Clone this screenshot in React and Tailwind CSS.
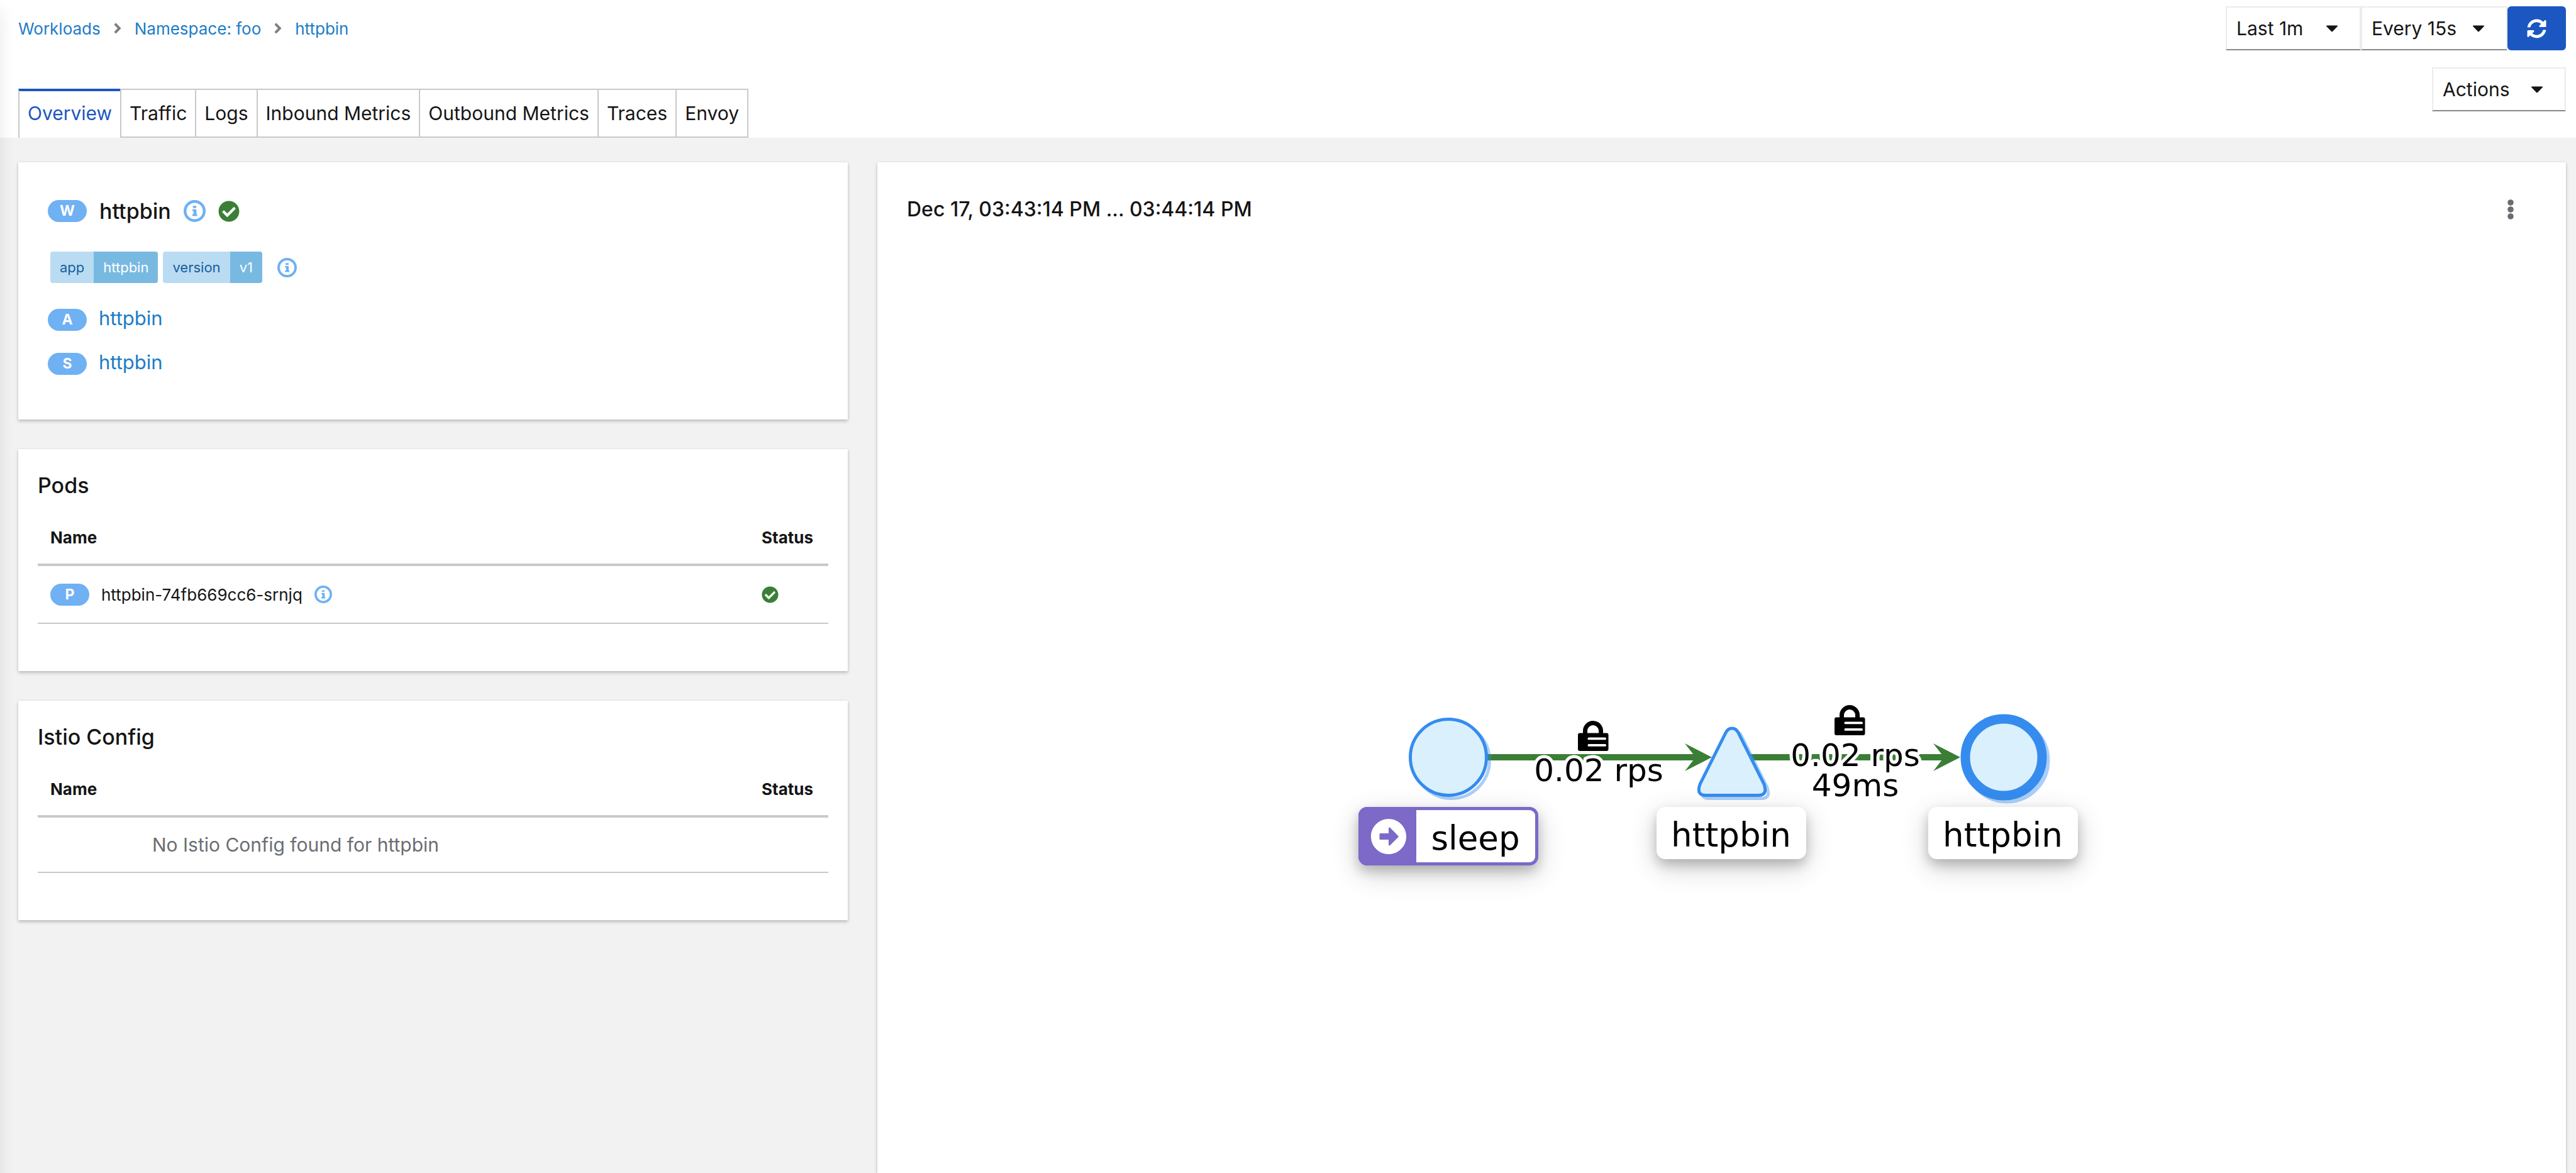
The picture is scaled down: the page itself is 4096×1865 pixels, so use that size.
import React from "react";
import { FaAngleRight, FaArrowAltCircleRight, FaCheckCircle, FaSyncAlt } from "react-icons/fa";

const tabs = ["Overview", "Traffic", "Logs", "Inbound Metrics", "Outbound Metrics", "Traces", "Envoy"];

function Caret() {
  return (
    <svg viewBox="0 0 18 10" className="h-[11px] w-[18px]" fill="currentColor" aria-hidden="true">
      <path d="M1 0h16c1 0 1.3 1 .7 1.600L10 9.500c-.6.600-1.400.600-2 0L.3 1.600C-.3 1 0 0 1 0z" />
    </svg>
  );
}

function Info({ className }) {
  return (
    <svg viewBox="0 0 36 36" className={`shrink-0 text-[#6fb1f3] ${className}`} role="img" aria-label="Information">
      <circle cx="18" cy="18" r="15.700" fill="none" stroke="currentColor" strokeWidth="4.600" />
      <path
        fill="currentColor"
        d="M15.800 9.600h4.400q.6 0 .6.600v2.200q0 .6-.6.600h-4.400q-.6 0-.6-.6v-2.200q0-.6.6-.6zM14.800 15.200h5.500q.6 0 .6.600v7.400h.7q.6 0 .6.600v1.800q0 .6-.6.600h-6.800q-.6 0-.6-.6v-1.800q0-.6.6-.6h1.300V18h-1.300q-.6 0-.6-.6v-1.600q0-.6.6-.6z"
      />
    </svg>
  );
}

function Badge({ children }) {
  return (
    <span className="flex h-[35px] w-[62px] shrink-0 items-center justify-center rounded-full bg-[#6fb1f3] text-[23px] leading-none font-bold text-white">
      {children}
    </span>
  );
}

function Label({ name, value }) {
  return (
    <span className="flex h-[50px] overflow-hidden rounded-[4px] text-[22px] leading-[50px]">
      <span className="bg-[#b9dcf2] px-[15px] text-[#1a5c9e]">{name}</span>
      <span className="bg-[#78b9e2] px-[15px] text-white">{value}</span>
    </span>
  );
}

function Drop({ label, options, className }) {
  return (
    <div className={`relative flex h-[70px] items-center ${className}`}>
      <select
        aria-label={label}
        className="h-full w-full appearance-none rounded-none border-2 border-[#ebebeb] border-b-[#85878b] bg-white px-[15px] text-[30px] text-[#151515]"
      >
        {options.map((o) => (
          <option key={o}>{o}</option>
        ))}
      </select>
      <span className="pointer-events-none absolute right-[37px]">
        <Caret />
      </span>
    </div>
  );
}

function Card({ className = "", children }) {
  return (
    <section className={`bg-white shadow-[0_3px_5px_rgba(0,0,0,0.2),0_0_4px_rgba(0,0,0,0.08)] ${className}`}>
      {children}
    </section>
  );
}

function TableCard({ title, children, className = "" }) {
  return (
    <Card className={`px-[31px] pt-[38px] pb-[75px] ${className}`}>
      <h3 className="text-[34px] leading-[40px] font-medium">{title}</h3>
      <table className="mt-5 w-full border-separate border-spacing-0 text-left">
        <thead>
          <tr className="h-[88px] text-[26px]">
            <th className="border-b-4 border-[#c9c9c9] pl-5 font-bold">Name</th>
            <th className="w-[126px] border-b-4 border-[#c9c9c9] pl-5 font-bold">Status</th>
          </tr>
        </thead>
        <tbody>{children}</tbody>
      </table>
    </Card>
  );
}

function Lock({ x, y }) {
  return (
    <g transform={`translate(${x} ${y})`}>
      <path d="M11.500 22V16a12.500 12.500 0 0 1 25 0V22" fill="none" stroke="#000" strokeWidth="7" />
      <rect y="19.500" width="48.500" height="28.500" rx="3" />
      <rect x="15.500" y="26.500" width="29.500" height="3.800" rx="1.900" fill="#fff" />
      <rect x="15.500" y="37" width="29.500" height="3.800" rx="1.900" fill="#fff" />
    </g>
  );
}

function Edge({ from, to }) {
  return (
    <g fill="#3a7f35">
      <rect x={from} y="84" width={to - 22 - from} height="10" />
      <path d={`M${to} 89L${to - 43} 67L${to - 26} 89L${to - 43} 111Z`} />
    </g>
  );
}

const triangle = "M584 50Q587.500 43 594 43Q600.500 43 604 50L645 132Q651 149.500 636 149.500H552Q537 149.500 543 132Z";

function NodeLabel({ className, icon, children }) {
  return (
    <div
      className={`absolute top-[168px] flex items-center rounded-[14px] bg-white text-[53px] leading-none text-black shadow-[0_9px_18px_rgba(0,0,0,0.2),0_13px_44px_rgba(0,0,0,0.19)] ${className}`}
    >
      {icon}
      <span className="flex-1 pt-[6px] text-center">{children}</span>
    </div>
  );
}

function Graph() {
  return (
    <div className="relative h-[270px] w-[1152px] font-['DejaVu_Sans',sans-serif]">
      <svg viewBox="0 0 1152 270" className="h-full w-full overflow-visible">
        <Edge from={200} to={562} />
        <Edge from={622} to={957} />
        <g fill="none" stroke="#358cee" strokeOpacity="0.42">
          <circle cx="148" cy="94" r="60.500" strokeWidth="5" />
          <path d={triangle} strokeWidth="5" transform="translate(5 5)" />
          <circle cx="1031" cy="94" r="61" strokeWidth="15" />
        </g>
        <g fill="#daf0fd" stroke="#358cee">
          <circle cx="143" cy="89" r="60.500" strokeWidth="5" />
          <path d={triangle} strokeWidth="5" />
          <circle cx="1026" cy="89" r="61" strokeWidth="15" />
        </g>
        <Lock x={349} y={31} />
        <Lock x={757} y={6} />
        <g fontSize="50" textAnchor="middle" stroke="#fff" strokeWidth="10" strokeLinejoin="round" style={{ paintOrder: "stroke" }}>
          <text x="382" y="127">0.02 rps</text>
          <text x="790" y="103">0.02 rps</text>
          <text x="790" y="151">49ms</text>
        </g>
      </svg>
      <NodeLabel
        className="left-0 h-[93px] w-[286px] border-5 border-[#7c69c8]"
        icon={
          <span className="-ml-[5px] flex h-[93px] w-[92px] shrink-0 items-center justify-center rounded-l-[14px] bg-[#7c69c8] pl-1 text-white">
            <FaArrowAltCircleRight className="size-[58px]" />
          </span>
        }
      >
        sleep
      </NodeLabel>
      <NodeLabel className="left-[474px] h-[83px] w-[238px]">httpbin</NodeLabel>
      <NodeLabel className="left-[906px] h-[83px] w-[238px]">httpbin</NodeLabel>
    </div>
  );
}

export default function App() {
  return (
    <div className="relative flex h-screen flex-col overflow-hidden bg-[#f2f2f2] font-['Inter',sans-serif] text-[#151515]">
      <header className="bg-white pt-[10px] pr-4 pl-[29px]">
        <div className="flex h-[70px] items-center justify-between">
          <nav aria-label="Breadcrumb" className="flex items-center gap-[18px] text-[26px] text-[#1c7cc7]">
            <a href="#workloads">Workloads</a>
            <FaAngleRight className="w-[18px] text-[26px] text-[#7c7f83]" />
            <a href="#namespace">Namespace: foo</a>
            <FaAngleRight className="w-[18px] text-[26px] text-[#7c7f83]" />
            <a href="#httpbin">httpbin</a>
          </nav>
          <div className="flex">
            <Drop label="Duration" options={["Last 1m"]} className="w-[215px]" />
            <Drop label="Refresh interval" options={["Every 15s"]} className="w-[233px]" />
            <button
              type="button"
              aria-label="Refresh"
              className="flex w-[93px] items-center justify-center rounded-[6px] bg-[#1c57c1] text-[31px] text-white"
            >
              <FaSyncAlt />
            </button>
          </div>
        </div>
        <div className="flex items-end justify-between pt-[27px]">
          <div role="tablist" className="flex h-[78px] text-[30px]">
            {tabs.map((t, i) => (
              <button
                key={t}
                type="button"
                role="tab"
                aria-selected={i === 0}
                className={
                  i === 0
                    ? "border-t-4 border-l-2 border-t-[#1c57c1] border-l-[#c9c9c9] px-[13px] pb-1 text-[#1c57c1]"
                    : "border-y-2 border-l-2 border-[#c9c9c9] px-[13px] last:border-r-2"
                }
              >
                {t}
              </button>
            ))}
          </div>
          <div className="pb-[42px]">
            <button
              type="button"
              aria-haspopup="menu"
              className="flex h-[70px] w-[213px] items-center justify-between border-2 border-[#ebebeb] border-b-[#85878b] pr-[35px] pl-[15px] text-[30px]"
            >
              Actions
              <Caret />
            </button>
          </div>
        </div>
      </header>

      <main className="grid flex-1 grid-cols-12 gap-x-[47px] pt-[39px] pr-4 pl-[29px]">
        <div className="col-span-4 flex flex-col gap-[47px]">
          <Card className="pt-[60px] pb-[71px] pl-[47px]">
            <div className="flex h-[35px] items-center gap-5">
              <Badge>W</Badge>
              <h2 className="text-[34px] font-medium">httpbin</h2>
              <Info className="size-[35px]" />
              <FaCheckCircle className="text-[34px] text-[#3a7f35]" />
            </div>
            <div className="mt-[47px] ml-1 flex items-center gap-2">
              <Label name="app" value="httpbin" />
              <Label name="version" value="v1" />
              <Info className="ml-4 size-[31px]" />
            </div>
            <div className="mt-[41px] flex flex-col gap-[35px] text-[31px] leading-[29px]">
              <div className="flex gap-[19px]">
                <Badge>A</Badge>
                <a href="#app" className="text-[#1c7cc7]">httpbin</a>
              </div>
              <div className="flex gap-[19px]">
                <Badge>S</Badge>
                <a href="#service" className="text-[#1c7cc7]">httpbin</a>
              </div>
            </div>
          </Card>

          <TableCard title="Pods">
            <tr className="h-[92px]">
              <td className="border-b-2 border-[#c9c9c9] pl-5">
                <div className="flex items-center gap-[19px] text-[26px]">
                  <Badge>P</Badge>
                  <span>httpbin-74fb669cc6-srnjq</span>
                  <Info className="size-[28px]" />
                </div>
              </td>
              <td className="border-b-2 border-[#c9c9c9] pl-5">
                <FaCheckCircle className="text-[27px] text-[#3a7f35]" />
              </td>
            </tr>
          </TableCard>

          <TableCard title="Istio Config">
            <tr className="h-[88px]">
              <td colSpan={2} className="border-b-2 border-[#c9c9c9] pl-[182px] text-[30px] text-[#6a6e73]">
                No Istio Config found for httpbin
              </td>
            </tr>
          </TableCard>
        </div>

        <Card className="col-span-8 flex flex-col pt-[47px] pr-[83px] pl-[47px]">
          <div className="flex h-14 items-center justify-between">
            <h2 className="text-[32px] font-medium">Dec 17, 03:43:14 PM ... 03:44:14 PM</h2>
            <button type="button" aria-label="Graph options">
              <svg viewBox="0 0 10 32" className="h-[32px] w-[10px]" fill="#6a6e73">
                <circle cx="5" cy="5" r="4.800" />
                <circle cx="5" cy="16" r="4.800" />
                <circle cx="5" cy="27" r="4.800" />
              </svg>
            </button>
          </div>
          <div className="flex flex-1 items-center justify-center pt-[274px] pl-8">
            <Graph />
          </div>
        </Card>
      </main>
      <div className="pointer-events-none absolute top-4 -bottom-8 -left-4 w-4 shadow-[0_0_26px_rgba(0,0,0,0.11)]" />
    </div>
  );
}
